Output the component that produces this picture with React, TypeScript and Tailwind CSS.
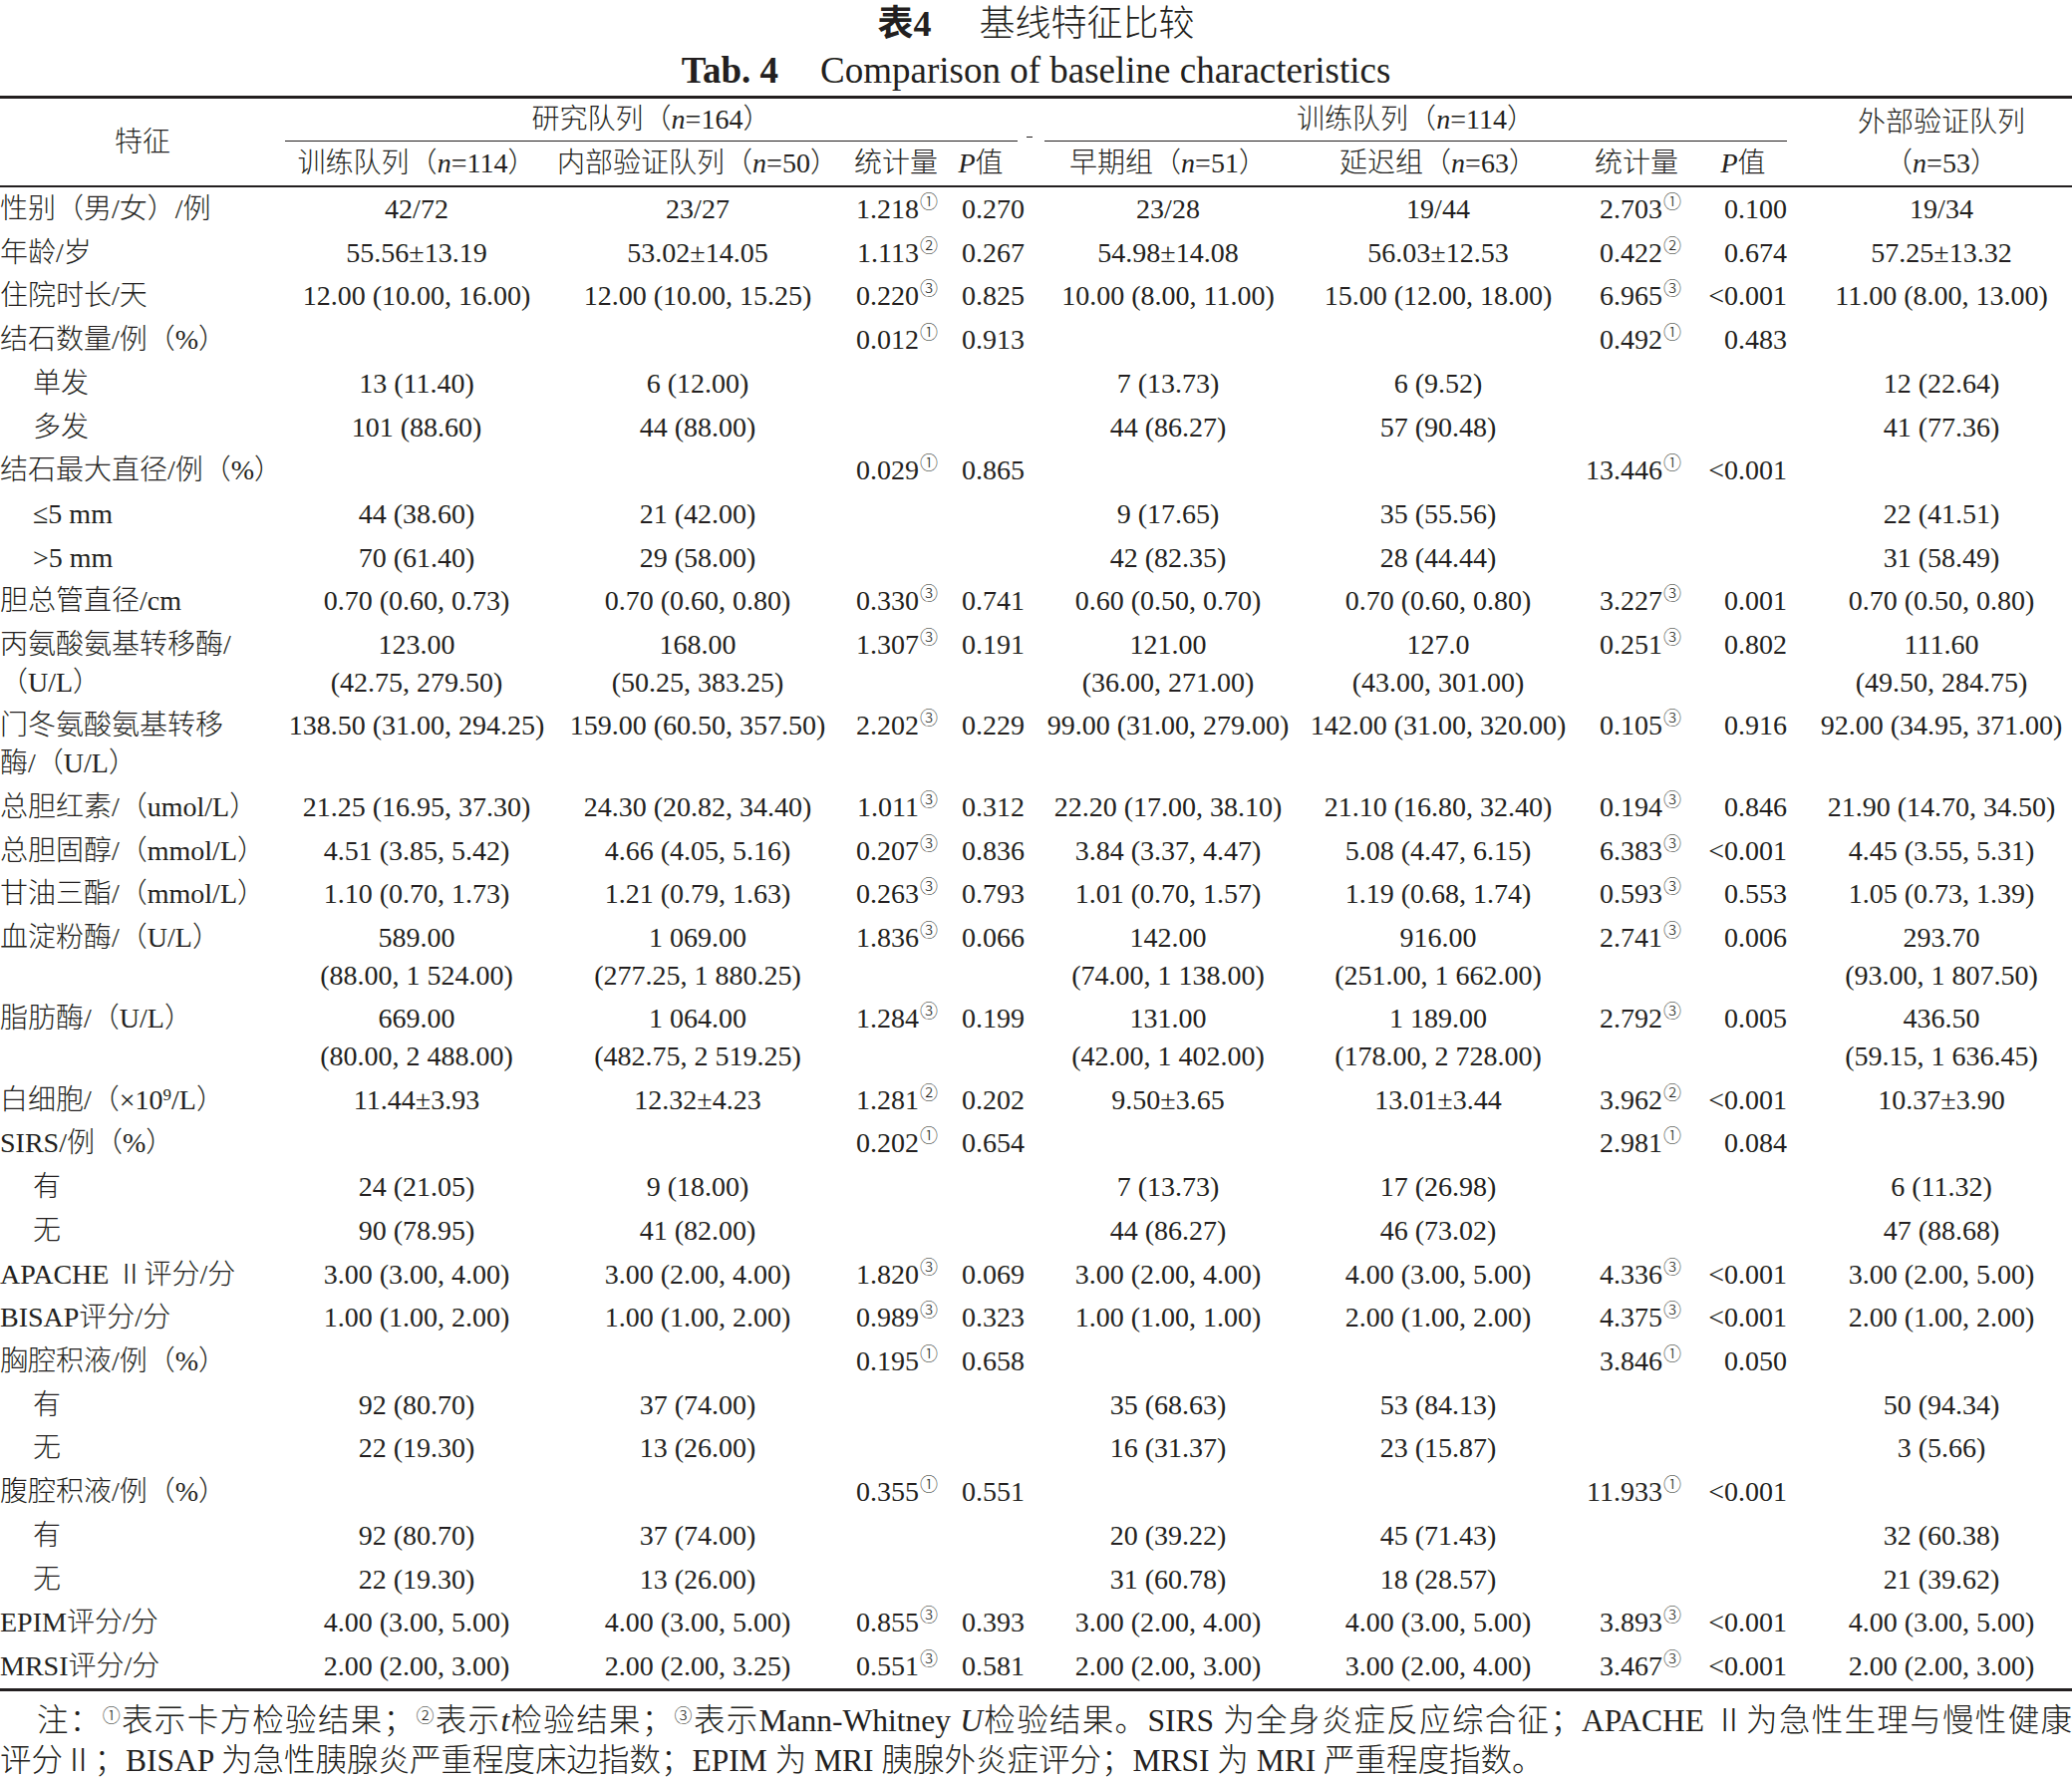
import React from 'react';

const SUPS = ['', '①', '②', '③'];

// label, c1, c2, stat1, p1, c5, c6, stat2, p2, c9 ; stat as "value|n"
const ROWS: string[][] = [
  ['性别（男/女）/例', '42/72', '23/27', '1.218|1', '0.270', '23/28', '19/44', '2.703|1', '0.100', '19/34'],
  ['年龄/岁', '55.56±13.19', '53.02±14.05', '1.113|2', '0.267', '54.98±14.08', '56.03±12.53', '0.422|2', '0.674', '57.25±13.32'],
  ['住院时长/天', '12.00 (10.00, 16.00)', '12.00 (10.00, 15.25)', '0.220|3', '0.825', '10.00 (8.00, 11.00)', '15.00 (12.00, 18.00)', '6.965|3', '<0.001', '11.00 (8.00, 13.00)'],
  ['结石数量/例（%）', '', '', '0.012|1', '0.913', '', '', '0.492|1', '0.483', ''],
  ['>单发', '13 (11.40)', '6 (12.00)', '', '', '7 (13.73)', '6 (9.52)', '', '', '12 (22.64)'],
  ['>多发', '101 (88.60)', '44 (88.00)', '', '', '44 (86.27)', '57 (90.48)', '', '', '41 (77.36)'],
  ['结石最大直径/例（%）', '', '', '0.029|1', '0.865', '', '', '13.446|1', '<0.001', ''],
  ['>≤5 mm', '44 (38.60)', '21 (42.00)', '', '', '9 (17.65)', '35 (55.56)', '', '', '22 (41.51)'],
  ['>>5 mm', '70 (61.40)', '29 (58.00)', '', '', '42 (82.35)', '28 (44.44)', '', '', '31 (58.49)'],
  ['胆总管直径/cm', '0.70 (0.60, 0.73)', '0.70 (0.60, 0.80)', '0.330|3', '0.741', '0.60 (0.50, 0.70)', '0.70 (0.60, 0.80)', '3.227|3', '0.001', '0.70 (0.50, 0.80)'],
  ['丙氨酸氨基转移酶/\n（U/L）', '123.00\n(42.75, 279.50)', '168.00\n(50.25, 383.25)', '1.307|3', '0.191', '121.00\n(36.00, 271.00)', '127.0\n(43.00, 301.00)', '0.251|3', '0.802', '111.60\n(49.50, 284.75)'],
  ['门冬氨酸氨基转移\n酶/（U/L）', '138.50 (31.00, 294.25)', '159.00 (60.50, 357.50)', '2.202|3', '0.229', '99.00 (31.00, 279.00)', '142.00 (31.00, 320.00)', '0.105|3', '0.916', '92.00 (34.95, 371.00)'],
  ['总胆红素/（umol/L）', '21.25 (16.95, 37.30)', '24.30 (20.82, 34.40)', '1.011|3', '0.312', '22.20 (17.00, 38.10)', '21.10 (16.80, 32.40)', '0.194|3', '0.846', '21.90 (14.70, 34.50)'],
  ['总胆固醇/（mmol/L）', '4.51 (3.85, 5.42)', '4.66 (4.05, 5.16)', '0.207|3', '0.836', '3.84 (3.37, 4.47)', '5.08 (4.47, 6.15)', '6.383|3', '<0.001', '4.45 (3.55, 5.31)'],
  ['甘油三酯/（mmol/L）', '1.10 (0.70, 1.73)', '1.21 (0.79, 1.63)', '0.263|3', '0.793', '1.01 (0.70, 1.57)', '1.19 (0.68, 1.74)', '0.593|3', '0.553', '1.05 (0.73, 1.39)'],
  ['血淀粉酶/（U/L）', '589.00\n(88.00, 1 524.00)', '1 069.00\n(277.25, 1 880.25)', '1.836|3', '0.066', '142.00\n(74.00, 1 138.00)', '916.00\n(251.00, 1 662.00)', '2.741|3', '0.006', '293.70\n(93.00, 1 807.50)'],
  ['脂肪酶/（U/L）', '669.00\n(80.00, 2 488.00)', '1 064.00\n(482.75, 2 519.25)', '1.284|3', '0.199', '131.00\n(42.00, 1 402.00)', '1 189.00\n(178.00, 2 728.00)', '2.792|3', '0.005', '436.50\n(59.15, 1 636.45)'],
  ['WBC', '11.44±3.93', '12.32±4.23', '1.281|2', '0.202', '9.50±3.65', '13.01±3.44', '3.962|2', '<0.001', '10.37±3.90'],
  ['SIRS/例（%）', '', '', '0.202|1', '0.654', '', '', '2.981|1', '0.084', ''],
  ['>有', '24 (21.05)', '9 (18.00)', '', '', '7 (13.73)', '17 (26.98)', '', '', '6 (11.32)'],
  ['>无', '90 (78.95)', '41 (82.00)', '', '', '44 (86.27)', '46 (73.02)', '', '', '47 (88.68)'],
  ['APACHE Ⅱ评分/分', '3.00 (3.00, 4.00)', '3.00 (2.00, 4.00)', '1.820|3', '0.069', '3.00 (2.00, 4.00)', '4.00 (3.00, 5.00)', '4.336|3', '<0.001', '3.00 (2.00, 5.00)'],
  ['BISAP评分/分', '1.00 (1.00, 2.00)', '1.00 (1.00, 2.00)', '0.989|3', '0.323', '1.00 (1.00, 1.00)', '2.00 (1.00, 2.00)', '4.375|3', '<0.001', '2.00 (1.00, 2.00)'],
  ['胸腔积液/例（%）', '', '', '0.195|1', '0.658', '', '', '3.846|1', '0.050', ''],
  ['>有', '92 (80.70)', '37 (74.00)', '', '', '35 (68.63)', '53 (84.13)', '', '', '50 (94.34)'],
  ['>无', '22 (19.30)', '13 (26.00)', '', '', '16 (31.37)', '23 (15.87)', '', '', '3 (5.66)'],
  ['腹腔积液/例（%）', '', '', '0.355|1', '0.551', '', '', '11.933|1', '<0.001', ''],
  ['>有', '92 (80.70)', '37 (74.00)', '', '', '20 (39.22)', '45 (71.43)', '', '', '32 (60.38)'],
  ['>无', '22 (19.30)', '13 (26.00)', '', '', '31 (60.78)', '18 (28.57)', '', '', '21 (39.62)'],
  ['EPIM评分/分', '4.00 (3.00, 5.00)', '4.00 (3.00, 5.00)', '0.855|3', '0.393', '3.00 (2.00, 4.00)', '4.00 (3.00, 5.00)', '3.893|3', '<0.001', '4.00 (3.00, 5.00)'],
  ['MRSI评分/分', '2.00 (2.00, 3.00)', '2.00 (2.00, 3.25)', '0.551|3', '0.581', '2.00 (2.00, 3.00)', '3.00 (2.00, 4.00)', '3.467|3', '<0.001', '2.00 (2.00, 3.00)'],
];

const GRID =
  'grid grid-cols-[286px_264px_300px_98px_94px_260px_282px_116px_122px_252px]';

function Stat({ v }: { v: string }) {
  if (!v) return null;
  const [num, n] = v.split('|');
  return (
    <>
      {num}
      <sup className="text-[18px] ml-[1px] -top-[10px]">{SUPS[Number(n)]}</sup>
    </>
  );
}

function Label({ text }: { text: string }) {
  if (text === 'WBC') {
    return (
      <>
        白细胞/（×10<sup className="text-[17px]">9</sup>/L）
      </>
    );
  }
  return <>{text.startsWith('>') ? text.slice(1) : text}</>;
}

function DataRow({ r }: { r: string[] }) {
  const indent = r[0].startsWith('>');
  const cell = 'py-[3px] leading-[37.7px] whitespace-pre';
  return (
    <>
      <div className={`${cell} text-left ${indent ? 'pl-[33px]' : ''}`}>
        <Label text={r[0]} />
      </div>
      <div className={`${cell} text-center`}>{r[1]}</div>
      <div className={`${cell} text-center`}>{r[2]}</div>
      <div className={`${cell} text-right pr-[7px]`}>
        <Stat v={r[3]} />
      </div>
      <div className={`${cell} text-right pr-[14px]`}>{r[4]}</div>
      <div className={`${cell} text-center`}>{r[5]}</div>
      <div className={`${cell} text-center`}>{r[6]}</div>
      <div className={`${cell} text-right pr-[13px]`}>
        <Stat v={r[7]} />
      </div>
      <div className={`${cell} text-right pr-[29px]`}>{r[8]}</div>
      <div className={`${cell} text-center`}>{r[9]}</div>
    </>
  );
}

export default function App() {
  return (
    <div className="w-[2079px] h-[1785px] overflow-hidden bg-white text-[#231f20] font-['Liberation_Serif','Noto_Sans_CJK_SC',serif] text-[28px] font-light">
      {/* Titles */}
      <div className="h-[46px] pt-[2px] leading-[44px] text-center text-[36px]">
        <span className="font-bold">表4</span>
        <span className="ml-[48px]">基线特征比较</span>
      </div>
      <div className="h-[50px] leading-[50px] text-center text-[37px]">
        <span className="font-bold">Tab. 4</span>
        <span className="ml-[42px]">Comparison of baseline characteristics</span>
      </div>

      {/* Top rule */}
      <div className="h-[3px] bg-[#231f20]" />

      {/* Header */}
      <div className={GRID}>
        <div className="row-span-2 flex items-center justify-center">特征</div>
        <div className="col-span-4 flex h-[43px]">
          <div className="flex-1 flex items-center justify-center border-b-[1.5px] border-[#231f20]">
            <span>
              研究队列（<i>n</i>=164）
            </span>
          </div>
          <div className="w-[21px] flex items-end pb-[4px]">
            <div className="ml-[9px] w-[6px] h-[1.5px] bg-[#231f20]" />
          </div>
        </div>
        <div className="col-span-4 h-[43px] pl-[6px] pr-[29px]">
          <div className="h-full flex items-center justify-center border-b-[1.5px] border-[#231f20]">
            <span>
              训练队列（<i>n</i>=114）
            </span>
          </div>
        </div>
        <div className="h-[43px] pt-[4px] flex items-center justify-center">外部验证队列</div>

        <div className="h-[44px] flex items-center justify-center whitespace-nowrap">
          训练队列（<i>n</i>=114）
        </div>
        <div className="h-[44px] flex items-center justify-center whitespace-nowrap">
          内部验证队列（<i>n</i>=50）
        </div>
        <div className="h-[44px] flex items-center justify-center whitespace-nowrap">统计量</div>
        <div className="h-[44px] flex items-center justify-center pr-[22px] whitespace-nowrap">
          <i>P</i>值
        </div>
        <div className="h-[44px] flex items-center justify-center whitespace-nowrap">
          早期组（<i>n</i>=51）
        </div>
        <div className="h-[44px] flex items-center justify-center whitespace-nowrap">
          延迟组（<i>n</i>=63）
        </div>
        <div className="h-[44px] flex items-center justify-center whitespace-nowrap">统计量</div>
        <div className="h-[44px] flex items-center justify-center pr-[24px] whitespace-nowrap">
          <i>P</i>值
        </div>
        <div className="h-[44px] flex items-center justify-center whitespace-nowrap">
          （<i>n</i>=53）
        </div>
      </div>

      {/* Header bottom rule */}
      <div className="h-[2px] bg-[#231f20]" />

      {/* Body */}
      <div className={GRID}>
        {ROWS.map((r, i) => (
          <DataRow key={i} r={r} />
        ))}
      </div>

      {/* Bottom rule */}
      <div className="h-[3px] bg-[#231f20]" />

      {/* Notes */}
      <div className="mt-[10px] leading-[40px] text-[31.5px]">
        <div className="indent-[37px] whitespace-nowrap text-justify [text-align-last:justify]">
          注：<sup className="text-[18px]">①</sup>表示卡方检验结果；<sup className="text-[18px]">②</sup>表示<i>t</i>检验结果；<sup className="text-[18px]">③</sup>表示Mann-Whitney <i>U</i>检验结果。SIRS 为全身炎症反应综合征；APACHE Ⅱ为急性生理与慢性健康
        </div>
        <div className="text-left">
          评分Ⅱ；BISAP 为急性胰腺炎严重程度床边指数；EPIM 为 MRI 胰腺外炎症评分；MRSI 为 MRI 严重程度指数。
        </div>
      </div>
    </div>
  );
}
